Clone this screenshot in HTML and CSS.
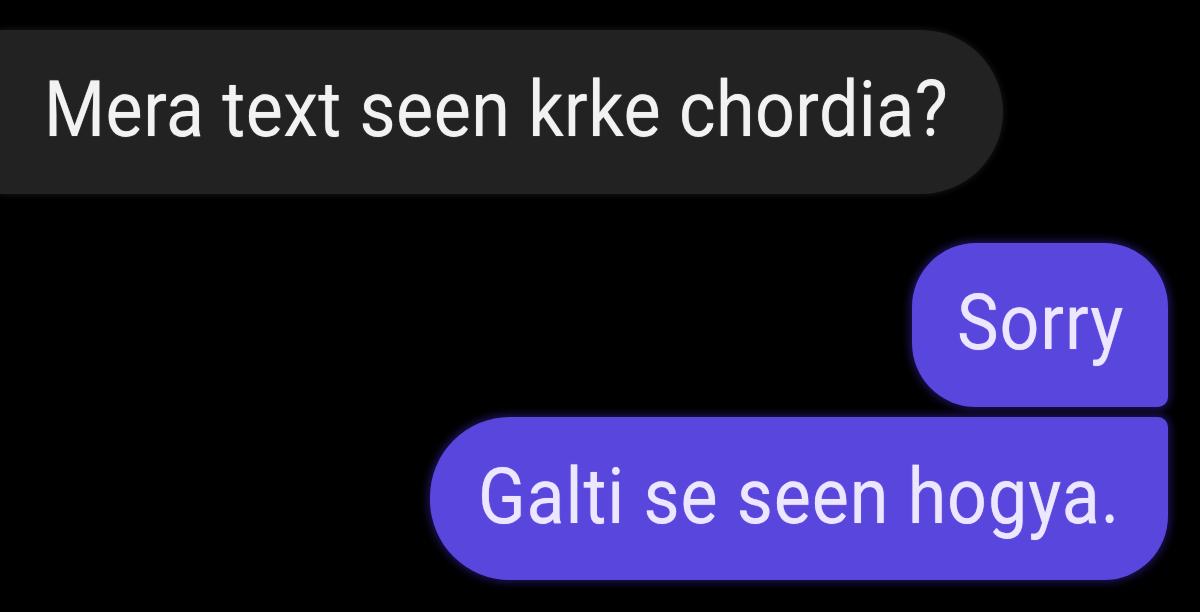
FILE: index.html
```html
<!DOCTYPE html>
<html>
<head>
<meta charset="utf-8">
<link rel="stylesheet" href="styles.css">
</head>
<body>
<div class="chat">
  <div class="bubble received"><span class="txt tight">Mera text seen krke chordia?</span></div>
  <div class="sent-group">
    <div class="bubble sent first"><span class="txt">Sorry</span></div>
    <div class="bubble sent last"><span class="txt">Galti se seen hogya.</span></div>
  </div>
</div>
</body>
</html>
```
FILE: styles.css
```css
html, body {
  margin: 0;
  padding: 0;
  background: #000;
  width: 1200px;
  height: 612px;
  overflow: hidden;
}
.chat {
  display: flex;
  flex-direction: column;
  padding-top: 30px;
  font-family: Roboto, "Liberation Sans", sans-serif;
}
.bubble {
  display: flex;
  align-items: center;
  box-sizing: border-box;
  height: 164px;
}
.txt {
  font-size: 70px;
  line-height: 1;
  letter-spacing: 0.9px;
  display: inline-block;
  transform: scaleY(1.1);
  white-space: nowrap;
  margin-top: -4px;
  text-shadow: 0 0 1px rgba(255, 255, 255, 0.5);
}
.tight {
  letter-spacing: 0.45px;
}
.received {
  width: 1003px;
  margin-left: 0;
  background: #222222;
  color: #f2f2f2;
  border-radius: 0 82px 82px 0;
  padding-left: 44px;
  box-shadow: 0 0 6px 1px #151515;
}
.sent-group {
  display: flex;
  flex-direction: column;
  align-items: flex-end;
  margin-top: 49px;
  margin-right: 32px;
  gap: 10px;
}
.sent {
  background: #5946dd;
  color: #ece6ff;
  box-shadow: 0 0 8px 2px rgba(45, 30, 140, 0.7);
}
.first {
  width: 256px;
  padding-left: 45px;
  border-radius: 64px 64px 10px 64px;
}
.last {
  width: 738px;
  padding-left: 48px;
  height: 163px;
  border-radius: 80px 10px 64px 80px;
}
```
